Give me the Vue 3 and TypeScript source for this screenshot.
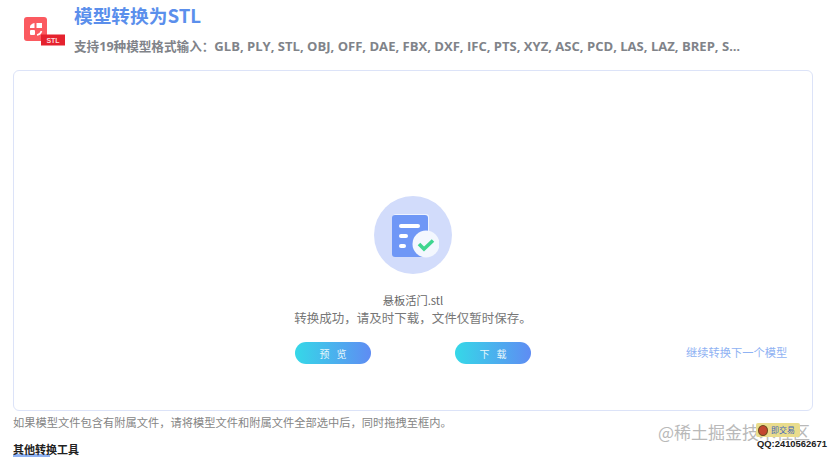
<script setup lang="ts">
const formats = 'GLB, PLY, STL, OBJ, OFF, DAE, FBX, DXF, IFC, PTS, XYZ, ASC, PCD, LAS, LAZ, BREP, STEP'
const fileName = '悬板活门.stl'
</script>

<template>
  <div class="page">
    <header class="head">
      <svg class="logo" width="42" height="32" viewBox="0 0 42 32">
        <rect x="0" y="0" width="23" height="24" rx="3" fill="#fb5a60" />
        <path d="M6 9.5 Q6.5 7 10.5 6 V11 H6 Z" fill="#fff" />
        <rect x="12.5" y="6" width="5.5" height="5" fill="#fff" />
        <rect x="6" y="13" width="5" height="5" rx="1" fill="#fff" />
        <path d="M13 18 Q16.5 17.5 17.5 14" fill="none" stroke="#fff" stroke-width="1.6" />
        <rect x="17" y="17.5" width="24" height="11" fill="#e5222e" />
        <text x="29" y="26" class="logo-text" text-anchor="middle">STL</text>
      </svg>
      <div class="head-text">
        <h1 class="title">模型转换为STL</h1>
        <p class="sub">支持19种模型格式输入：<span class="formats">{{ formats }}</span></p>
      </div>
    </header>

    <section class="card">
      <div class="circle">
        <svg width="52" height="52" viewBox="0 0 52 52">
          <rect x="6" y="5" width="36" height="43" rx="3" fill="#eef3fe" />
          <rect x="5" y="6" width="36" height="42" rx="3" fill="#6f97f6" />
          <rect x="12" y="15" width="21" height="4" rx="2" fill="#fff" />
          <rect x="12" y="25" width="9" height="4" rx="2" fill="#fff" />
          <rect x="12" y="35" width="7" height="4" rx="2" fill="#fff" />
          <circle cx="39" cy="35" r="13.5" fill="#f3f7fe" />
          <path d="M32 35 L37 40 L46 31.5" fill="none" stroke="#3fd68f" stroke-width="3.6" />
        </svg>
      </div>
      <div class="file">{{ fileName }}</div>
      <div class="msg">转换成功，请及时下载，文件仅暂时保存。</div>
      <div class="actions">
        <button class="btn">预 览</button>
        <button class="btn">下 载</button>
        <a class="next">继续转换下一个模型</a>
      </div>
    </section>

    <p class="note">如果模型文件包含有附属文件，请将模型文件和附属文件全部选中后，同时拖拽至框内。</p>
    <div class="other">其他转换工具</div>

    <div class="mark">@稀土掘金技术社区</div>
    <div class="badge">
      <span class="face"></span>
      <span class="badge-text">即交易</span>
    </div>
    <div class="qq">QQ:2410562671</div>
  </div>
</template>

<style scoped>
.page {
  position: relative;
  width: 829px;
  height: 459px;
  overflow: hidden;
  background: #fff;
  padding: 0 16px 0 13px;
  box-sizing: border-box;
  font-family: "Noto Sans CJK SC", "Noto Sans", sans-serif;
}

.head {
  display: flex;
  align-items: flex-start;
  height: 70px;
}

.logo {
  margin: 17px 0 0 11px;
  flex-shrink: 0;
  width: 42px;
}

.logo-text {
  font-family: "Liberation Sans", sans-serif;
  font-size: 7px;
  font-weight: 700;
  fill: #ffd9dc;
}

.head-text {
  margin-left: 8px;
  min-width: 0;
  width: 666px;
}

.title {
  margin: 0;
  height: 32px;
  line-height: 30px;
  font-size: 18.7px;
  font-weight: 700;
  color: #5b8fec;
}

.sub {
  margin: 4px 0 0;
  line-height: 20px;
  font-family: "Open Sans", "Noto Sans CJK SC", sans-serif;
  font-size: 12.6px;
  font-weight: 700;
  color: #808389;
  white-space: nowrap;
  overflow: hidden;
  text-overflow: ellipsis;
}

.formats {
  font-size: 13.05px;
}

.card {
  height: 341px;
  box-sizing: border-box;
  border: 1px solid #dce3f8;
  border-radius: 6px;
  display: flex;
  flex-direction: column;
  align-items: center;
  padding-top: 125px;
}

.circle {
  width: 78px;
  height: 78px;
  border-radius: 50%;
  background: #d2dcfb;
  display: flex;
  align-items: center;
  justify-content: center;
}

.file {
  margin-top: 17px;
  font-size: 11.25px;
  line-height: 18px;
  color: #666;
}

.msg {
  font-size: 12.5px;
  line-height: 17px;
  color: #777;
}

.actions {
  position: relative;
  align-self: stretch;
  display: flex;
  justify-content: center;
  gap: 84px;
  margin-top: 16px;
}

.btn {
  width: 76px;
  height: 22px;
  padding: 0;
  border: none;
  border-radius: 11px;
  background: linear-gradient(90deg, #35d8e8 0%, #5f8cf3 100%);
  color: #e6f7fb;
  font-family: inherit;
  font-size: 10px;
  word-spacing: 5px;
}

.next {
  position: absolute;
  left: 672px;
  top: 1px;
  font-size: 11.25px;
  line-height: 18px;
  color: #8fb2f3;
}

.note {
  margin: 2px 0 0;
  font-size: 11.25px;
  line-height: 18px;
  color: #858585;
}

.other {
  margin-top: 10px;
  font-size: 11px;
  line-height: 16px;
  font-weight: 700;
  color: #222;
  background: linear-gradient(#8fb2f3, #8fb2f3) left 13px / 37px 3px no-repeat;
}

.mark {
  position: absolute;
  left: 658px;
  top: 421px;
  font-size: 17px;
  line-height: 22px;
  color: #b9b9b9;
  white-space: nowrap;
}

.badge {
  position: absolute;
  left: 756px;
  top: 423px;
  width: 44px;
  height: 14px;
  display: flex;
  align-items: center;
  background: #e9dc8c;
  border-radius: 2px;
}

.face {
  width: 10px;
  height: 11px;
  margin-left: 2px;
  border-radius: 50%;
  background: #c3472f;
  border: 1px solid #6d4a1d;
  box-sizing: border-box;
}

.badge-text {
  margin-left: 3px;
  font-size: 8px;
  line-height: 12px;
  color: #3d63b8;
  white-space: nowrap;
}

.qq {
  position: absolute;
  left: 757px;
  top: 437px;
  font-family: "Liberation Sans", sans-serif;
  font-size: 9.4px;
  font-weight: 700;
  line-height: 14px;
  color: #222;
  white-space: nowrap;
}
</style>
